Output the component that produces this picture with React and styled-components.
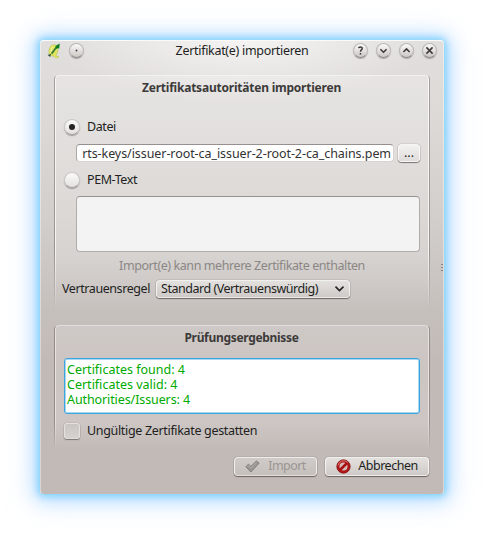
import React from 'react';
import styled, { createGlobalStyle } from 'styled-components';

const Global = createGlobalStyle`
  * { box-sizing: border-box; }
  body { margin: 0; background: #fff; overflow: hidden; }
`;

const Desktop = styled.div`
  height: 534px;
  padding: 40px;
  font: 12.5px/16px "Noto Sans", sans-serif;
  color: #221f1e;
`;

const Window = styled.main`
  position: relative;
  display: flex;
  flex-direction: column;
  width: 404px;
  height: 454px;
  padding: 0 15px 0 14px;
  border-radius: 4px;
  border: 1px solid rgba(255, 255, 255, 0.4);
  border-top-color: #fafafa;
  border-bottom-color: transparent;
  background:
    radial-gradient(ellipse 190px 62px at 50% 0, rgba(255, 255, 255, 0.65), transparent),
    linear-gradient(#e1dfdd 0, #dcd9d6 80px, #d2cecb 180px, #c6c0bd 270px, #c2bab7 320px);
  background-origin: border-box;
  box-shadow:
    0 0 6px 2px rgba(110, 205, 250, 0.75),
    0 1px 15px 5px rgba(130, 200, 255, 0.5),
    0 2px 28px 8px rgba(170, 210, 255, 0.38);
`;

const Text = styled.span`
  white-space: pre;
  letter-spacing: ${(p) => p.$gap || 0}px;
`;

const TitleBar = styled.header`
  display: grid;
  grid-template-columns: 1fr auto 1fr;
  align-items: center;
  height: 20px;
  margin: 0 -9px 14px -8px;
`;

const TitleSide = styled.div`
  display: flex;
  align-items: center;
  justify-content: ${(p) => (p.$end ? 'flex-end' : 'flex-start')};
  gap: 8px;
  margin-top: -1px;
`;

const RoundButton = styled.button`
  display: flex;
  align-items: center;
  justify-content: center;
  width: 15px;
  height: 15px;
  padding: 0;
  border: 1px solid #bbb8b6;
  border-bottom-color: #8d8986;
  border-radius: 50%;
  background: linear-gradient(#fafaf9, #cbc8c5);
  box-shadow: 0 1px 1px rgba(0, 0, 0, 0.25);
  color: #3b3837;
`;

const Group = styled.section`
  position: relative;
  display: flex;
  flex-direction: column;
  width: 374px;
  height: ${(p) => p.$height}px;
  margin-top: ${(p) => p.$top || 0}px;
  padding: 5px 9px 0 8px;
  border-radius: 4px 4px 0 0;
  background: linear-gradient(rgba(255, 255, 255, ${(p) => p.$tint}), rgba(255, 255, 255, 0.18) 78%, transparent);

  &::before,
  &::after {
    content: '';
    position: absolute;
    inset: 0;
    border: 1px solid rgba(255, 255, 255, ${(p) => p.$edge});
    border-bottom: 0;
    border-radius: 4px 4px 0 0;
    pointer-events: none;
    mask-image: linear-gradient(#000 75%, transparent);
  }
  &::after {
    inset: 0 -1px 0;
    border-color: rgba(80, 72, 68, 0.04) rgba(80, 72, 68, 0.42) transparent;
  }
`;

const GroupTitle = styled.h2`
  margin: 0;
  font-size: 12px;
  line-height: 16px;
  text-align: center;
  color: #3d3a3a;
`;

const OptionRow = styled.label`
  display: flex;
  align-items: center;
  gap: 7px;
  height: 18px;
  margin: ${(p) => p.$top}px 0 0 1px;
`;

const Indicator = styled.span`
  display: flex;
  align-items: center;
  justify-content: center;
  width: 16px;
  height: 16px;
`;

const RadioMark = styled(Indicator)`
  border: 1px solid #cbc7c5;
  border-bottom-color: #a7a29f;
  border-radius: 50%;
  background: linear-gradient(#fbfbfb, #e3e1df);
  box-shadow: 0 1px 1px rgba(0, 0, 0, 0.3);
`;

const CheckMark = styled(Indicator)`
  border: 1px solid #e4e1df;
  border-bottom-color: #dedbd8;
  border-radius: 3px;
  background: linear-gradient(#cac5c2, #d6d2cf);
  box-shadow: 0 0 1px rgba(60, 52, 48, 0.7), 0 1px 1px rgba(30, 24, 22, 0.4);
`;

const Dot = styled.i`
  width: 6px;
  height: 6px;
  border-radius: 50%;
  background: #262423;
`;

const FileRow = styled.div`
  display: flex;
  align-items: center;
  gap: 4px;
  height: 20px;
  margin: 7px 0 0 13px;
`;

const PathField = styled.div`
  display: flex;
  justify-content: flex-end;
  align-items: center;
  width: 318px;
  height: 18px;
  padding: 1px 2px 0 2px;
  border: 1px solid #d6d3d1;
  border-top-color: #96918e;
  border-left-color: #aca8a5;
  border-radius: 4px;
  background: #fff;
  color: #333;
`;

const Button = styled.button`
  display: flex;
  align-items: center;
  justify-content: ${(p) => p.$justify || 'center'};
  gap: ${(p) => p.$gap || 0}px;
  flex: none;
  width: ${(p) => p.$width}px;
  height: ${(p) => p.$height || 18}px;
  padding: ${(p) => p.$padding || '0'};
  border: 1px solid rgba(255, 255, 255, 0.7);
  border-bottom-color: rgba(255, 255, 255, 0.4);
  border-radius: 4px;
  background: ${(p) => {
    if (p.disabled) return 'linear-gradient(#d0cbc8, #c6c0bd)';
    return p.$light ? 'linear-gradient(#f3f2f1, #dfdcda)' : 'linear-gradient(#e3e1de, #cfcac7)';
  }};
  box-shadow: 0 0 1px rgba(50, 42, 38, 0.75), 0 1px 1px rgba(30, 24, 22, 0.5);
  color: ${(p) => (p.disabled ? '#9b9693' : '#221f1e')};
  font: inherit;
`;

const PemArea = styled.div`
  width: 344px;
  height: 56px;
  margin: 7px 0 0 13px;
  border: 1px solid #b0aca9;
  border-top-color: #98938f;
  border-radius: 4px;
  background: #f3f3f3;
`;

const Hint = styled.div`
  margin: 6px 0 0 1px;
  text-align: center;
  color: #8b8785;
`;

const TrustRow = styled.div`
  display: flex;
  align-items: center;
  gap: 6px;
  height: 20px;
  margin: 5px 0 0 -1px;
`;

const Results = styled.div`
  display: flex;
  flex-direction: column;
  width: 356px;
  height: 56px;
  margin: 12px 0 0 1px;
  padding: 3px 2px;
  border: 1px solid #3da3dc;
  border-radius: 3px;
  background: #fff;
  box-shadow: inset 0 0 0 1px #a6d8f2;
  color: #00aa00;
  line-height: 15px;
`;

const Footer = styled.footer`
  display: flex;
  justify-content: flex-end;
  gap: 8px;
  margin: 7px -1px 0 0;
`;

const SizeGrip = styled.div`
  position: absolute;
  right: 0;
  top: 223px;
  width: 2px;
  height: 8px;
  background: repeating-linear-gradient(#8a8481 0 1px, transparent 1px 3px);
`;

const Glyph = ({ d, size = 11 }) => (
  <svg width={size} height={size} viewBox="0 0 11 11" fill="none" stroke="currentColor" strokeWidth="1.5">
    <path d={d} />
  </svg>
);

const QgisLogo = () => (
  <svg width="14" height="16" viewBox="0 0 14 16">
    <path d="M7.6 1.8C3.9 1.6 1.7 5.2 2 8.9c.2 3.4 2.5 4.7 4.6 3.9.9 1.9 3.3 3 5.2 1.3l-.5-.9c-1.1.7-2 .1-2.3-1.1 2.7-3 2.6-9.8-1.4-10.3Z" fill="#dfe65e" stroke="#b9c04e" strokeWidth=".6" />
    <path d="M6.1 3.8c-2 1.6-2.5 4.4-2 6.2" stroke="#f6f8b4" strokeWidth="1" fill="none" />
    <path d="M4.6 10.6 9.6 4" stroke="#3c7b35" strokeWidth="1.8" />
    <path d="m8 3.3 4.7-2.7-.5 5.2-1.6-.9-1 1.1-1.3-1 1-1.2Z" fill="#0b7d1e" />
    <path d="m.6 12.1 3.5-1.3-.9 3.2Z" fill="#34533a" />
  </svg>
);

const CheckIcon = () => (
  <svg width="15" height="13" viewBox="0 0 15 13">
    <path d="m.8 6.7 2.7-2.5 2.3 2.3L11.5.9l2.6 2.2L5.9 12Z" fill="#9b9794" stroke="#7d7976" strokeWidth=".9" />
    <path d="m2.2 6.6 1.3-1.1 2.3 2.4 5.8-5.7" fill="none" stroke="#b5b1ae" strokeWidth=".8" />
  </svg>
);

const CancelIcon = () => (
  <svg width="15" height="15" viewBox="0 0 15 15">
    <circle cx="7.5" cy="7.5" r="6.7" fill="#b01717" stroke="#7e0c0c" strokeWidth=".7" />
    <circle cx="7.5" cy="7.5" r="4" fill="#d3bcb9" />
    <path d="m4 11 7-7" stroke="#a81111" strokeWidth="2.5" />
    <path d="M2 6.5a5.7 5.7 0 0 1 9.5-3.2" fill="none" stroke="#e08079" strokeWidth=".9" />
  </svg>
);

export default function App() {
  return (
    <Desktop>
      <Global />
      <Window>
        <TitleBar>
          <TitleSide>
            <QgisLogo />
            <RoundButton aria-label="Menü">
              <svg width="3" height="3"><circle cx="1.5" cy="1.5" r=".9" fill="currentColor" /></svg>
            </RoundButton>
          </TitleSide>
          <Text $gap={-0.3}>Zertifikat(e) importieren</Text>
          <TitleSide $end>
            <RoundButton aria-label="Hilfe">
              <Glyph d="M3.5 3.1Q3.8 1.9 5.4 1.9C7.5 1.9 7.7 3.9 6.4 4.8Q5.5 5.4 5.5 6.8M5.5 8v1.4" />
            </RoundButton>
            <RoundButton aria-label="Minimieren"><Glyph d="m2.4 4.2 3.1 3.1 3.1-3.1" /></RoundButton>
            <RoundButton aria-label="Maximieren"><Glyph d="m2.4 7 3.1-3.1L8.6 7" /></RoundButton>
            <RoundButton aria-label="Schließen"><Glyph d="m2.4 2.4 6.2 6.2m0-6.2L2.4 8.6" /></RoundButton>
          </TitleSide>
        </TitleBar>

        <Group $height={235} $tint={0.22} $edge={0.75}>
          <GroupTitle><Text $gap={-0.22}>Zertifikatsautoritäten importieren</Text></GroupTitle>
          <OptionRow $top={22}>
            <RadioMark><Dot /></RadioMark>
            <Text $gap={-0.4}>Datei</Text>
          </OptionRow>
          <FileRow>
            <PathField><Text $gap={-0.07}>rts-keys/issuer-root-ca_issuer-2-root-2-ca_chains.pem</Text></PathField>
            <Button $width={22} $light><Text>...</Text></Button>
          </FileRow>
          <OptionRow $top={8}>
            <RadioMark />
            <Text $gap={-0.42}>PEM-Text</Text>
          </OptionRow>
          <PemArea />
          <Hint><Text $gap={-0.42}>Import(e) kann mehrere Zertifikate enthalten</Text></Hint>
          <TrustRow>
            <Text $gap={-0.42}>Vertrauensregel</Text>
            <Button $width={194} $justify="space-between" $padding="0 4px 1px">
              <Text $gap={-0.47}>Standard (Vertrauenswürdig)</Text>
              <Glyph d="M1.5 3.6 5.5 7.6l4-4" />
            </Button>
          </TrustRow>
        </Group>

        <Group $height={125} $top={15} $tint={0.16} $edge={0.5}>
          <GroupTitle><Text $gap={-0.32}>Prüfungsergebnisse</Text></GroupTitle>
          <Results>
            <Text>Certificates found: 4</Text>
            <Text>Certificates valid: 4</Text>
            <Text $gap={-0.1}>Authorities/Issuers: 4</Text>
          </Results>
          <OptionRow $top={8}>
            <CheckMark />
            <Text $gap={-0.33}>Ungültige Zertifikate gestatten</Text>
          </OptionRow>
        </Group>

        <Footer>
          <Button disabled $width={83} $height={19} $gap={8} $padding="0 0 1px">
            <CheckIcon />
            <Text $gap={-0.6}>Import</Text>
          </Button>
          <Button $width={104} $height={19} $gap={7} $padding="0 0 1px">
            <CancelIcon />
            <Text $gap={-0.5}>Abbrechen</Text>
          </Button>
        </Footer>
        <SizeGrip />
      </Window>
    </Desktop>
  );
}
